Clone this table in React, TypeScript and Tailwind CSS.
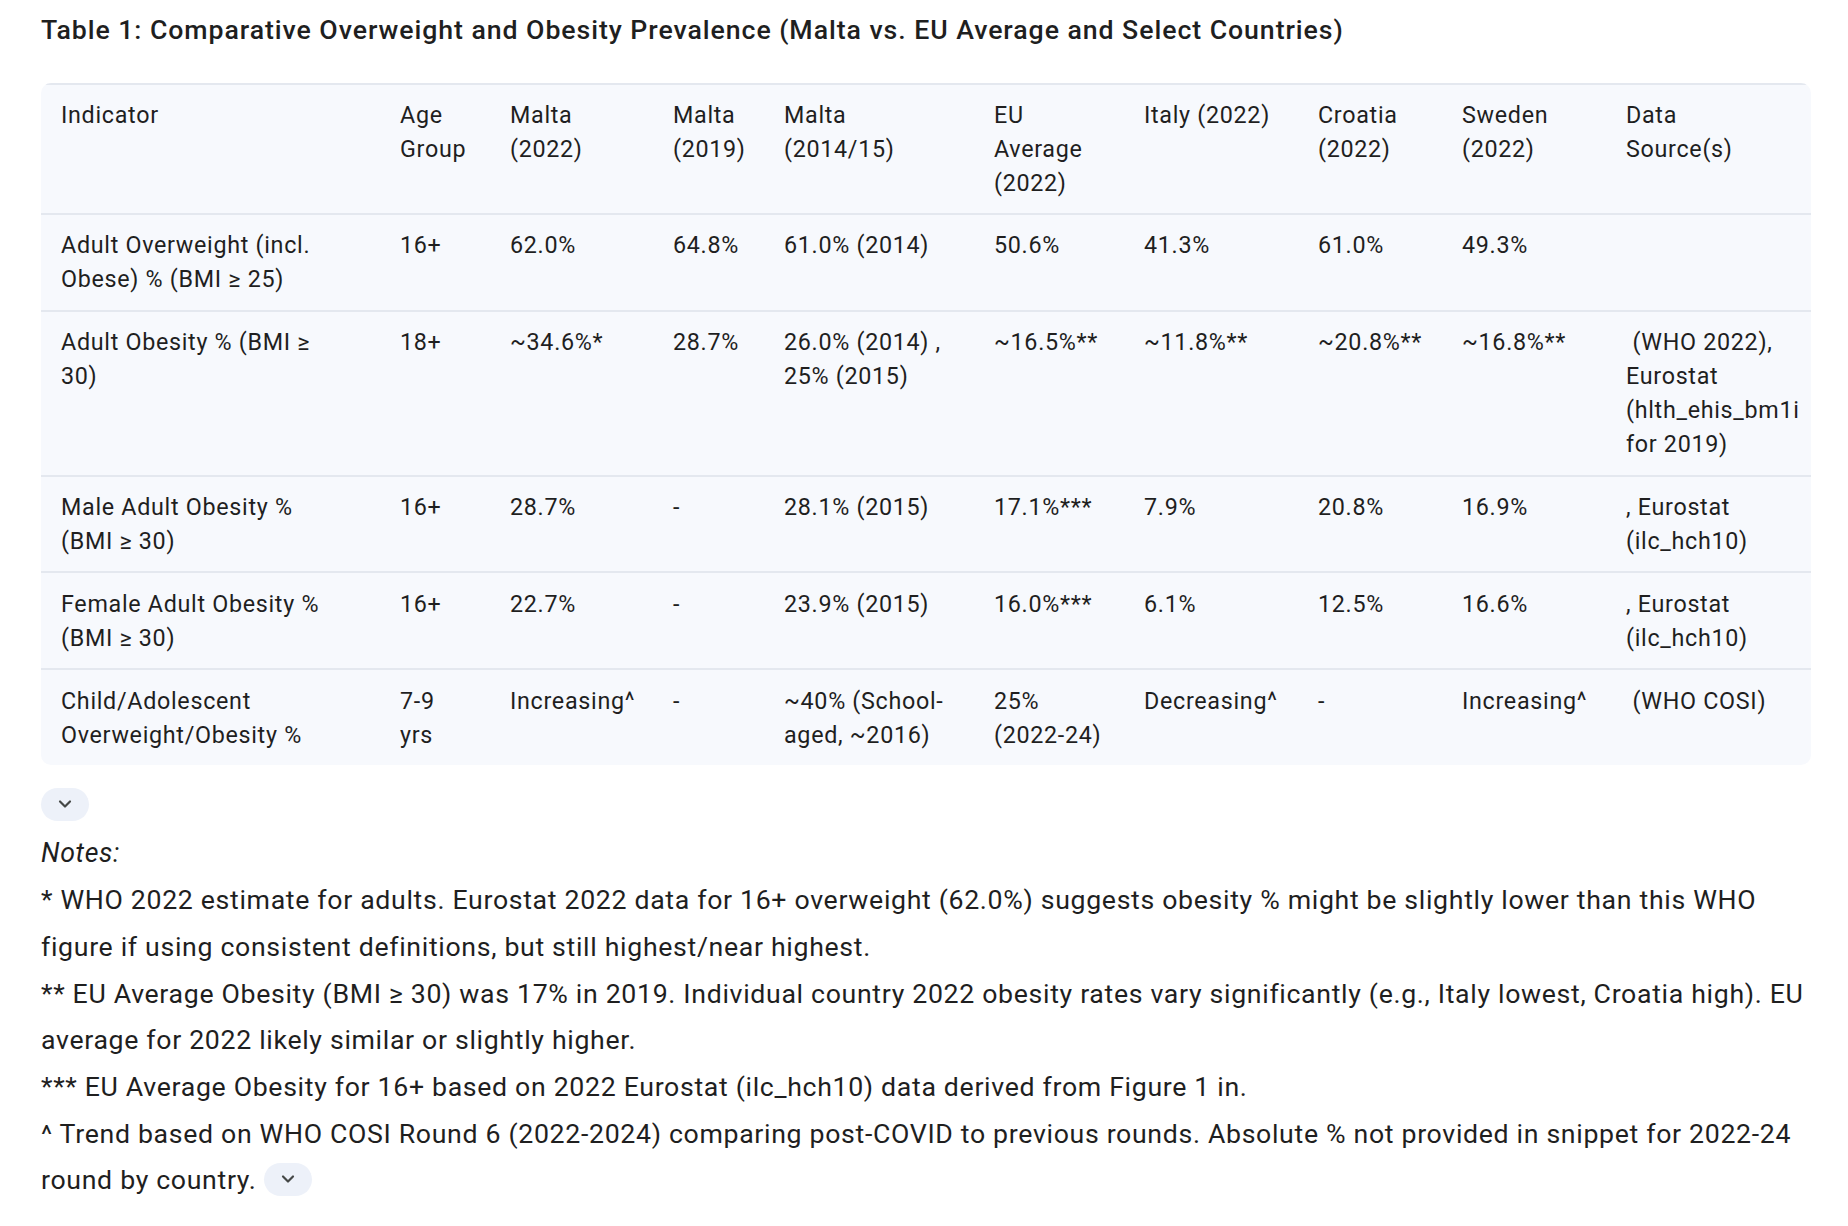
import React from 'react';

const font = { fontFamily: 'Roboto, "Noto Sans", Arial, sans-serif' };

// widths include padding; pr differs per column to mimic the original wrapping
const columns = [
    { label: 'Indicator', width: 339, pr: 'pr-[36px]' },
    { label: 'Age Group', width: 110, pr: 'pr-[28px]' },
    { label: 'Malta (2022)', width: 163, pr: 'pr-[12px]' },
    { label: 'Malta (2019)', width: 111, pr: 'pr-[12px]' },
    { label: 'Malta (2014/15)', width: 210, pr: 'pr-[12px]' },
    { label: 'EU Average (2022)', width: 150, pr: 'pr-[12px]' },
    { label: 'Italy (2022)', width: 174, pr: 'pr-[12px]' },
    { label: 'Croatia (2022)', width: 144, pr: 'pr-[12px]' },
    { label: 'Sweden (2022)', width: 164, pr: 'pr-[12px]' },
    { label: 'Data Source(s)', width: 205, pr: 'pr-[40px]' },
];

const rows: string[][] = [
    ['Adult Overweight (incl. Obese) % (BMI ≥ 25)', '16+', '62.0%', '64.8%', '61.0% (2014)', '50.6%', '41.3%', '61.0%', '49.3%', ''],
    ['Adult Obesity % (BMI ≥ 30)', '18+', '~34.6%*', '28.7%', '26.0% (2014) , 25% (2015)', '~16.5%**', '~11.8%**', '~20.8%**', '~16.8%**', '\u00a0(WHO\u00a02022), Eurostat (hlth_ehis_bm1i for 2019)'],
    ['Male Adult Obesity % (BMI ≥ 30)', '16+', '28.7%', '-', '28.1% (2015)', '17.1%***', '7.9%', '20.8%', '16.9%', ', Eurostat (ilc_hch10)'],
    ['Female Adult Obesity % (BMI ≥ 30)', '16+', '22.7%', '-', '23.9% (2015)', '16.0%***', '6.1%', '12.5%', '16.6%', ', Eurostat (ilc_hch10)'],
    ['Child/Adolescent Overweight/Obesity %', '7-9 yrs', 'Increasing^', '-', '~40% (School-aged, ~2016)', '25% (2022-24)', 'Decreasing^', '-', 'Increasing^', '\u00a0(WHO\u00a0COSI)'],
];

function Chevron() {
    return (
        <svg width="20" height="20" viewBox="0 0 24 24" fill="none" stroke="#444746" strokeWidth="2.6" strokeLinecap="round" strokeLinejoin="round">
            <path d="m6 9 6 6 6-6" />
        </svg>
    );
}

function ChevronButton({ className }: { className?: string }) {
    return (
        <span className={`inline-flex items-center justify-center w-[48px] h-[33px] rounded-full bg-[#edf1f9] ${className ?? ''}`}>
            <Chevron />
        </span>
    );
}

export default function App() {
    return (
        <div className="min-h-screen bg-white text-[#1f1f1f] pl-[41px] pr-[37px] pt-[10px]" style={font}>
            <h3 className="text-[26.7px] leading-[40px] font-medium tracking-[0.035em]">
                Table 1: Comparative Overweight and Obesity Prevalence (Malta vs. EU Average and Select Countries)
            </h3>

            <div className="mt-[33px] w-[1770px] rounded-[10px] overflow-hidden bg-[#f7f9fd]">
                <table className="table-fixed w-full text-left text-[23.3px] leading-[34px] tracking-[0.03em]">
                    <colgroup>
                        {columns.map((c) => (
                            <col key={c.label} style={{ width: c.width }} />
                        ))}
                    </colgroup>
                    <thead>
                        <tr className="border-t-2 border-[#e4e8ef]">
                            {columns.map((c) => (
                                <th key={c.label} className={`font-normal align-top pl-[20px] ${c.pr} py-[13px]`}>
                                    {c.label}
                                </th>
                            ))}
                        </tr>
                    </thead>
                    <tbody>
                        {rows.map((r, i) => (
                            <tr key={i} className="border-t-2 border-[#e4e8ef]">
                                {r.map((cell, j) => (
                                    <td key={j} className={`align-top pl-[20px] ${columns[j].pr} py-[13.4px]`}>
                                        {cell}
                                    </td>
                                ))}
                            </tr>
                        ))}
                    </tbody>
                </table>
            </div>

            <ChevronButton className="mt-[23px]" />

            <p className="mt-[9px] w-[1772px] text-[26.7px] leading-[46.7px] tracking-[0.025em]">
                <em>Notes:</em>
                <br />* WHO 2022 estimate for adults. Eurostat 2022 data for 16+ overweight (62.0%) suggests obesity % might be slightly lower than this WHO figure if using consistent definitions, but still highest/near highest.
                <br />** EU Average Obesity (BMI ≥ 30) was 17% in 2019. Individual country 2022 obesity rates vary significantly (e.g., Italy lowest, Croatia high). EU average for 2022 likely similar or slightly higher.
                <br />*** EU Average Obesity for 16+ based on 2022 Eurostat (ilc_hch10) data derived from Figure 1 in.
                <br />^ Trend based on WHO COSI Round 6 (2022-2024) comparing post-COVID to previous rounds. Absolute % not provided in snippet for 2022-24 round by country.{' '}
                <ChevronButton className="align-middle -mt-[6px]" />
            </p>
        </div>
    );
}
